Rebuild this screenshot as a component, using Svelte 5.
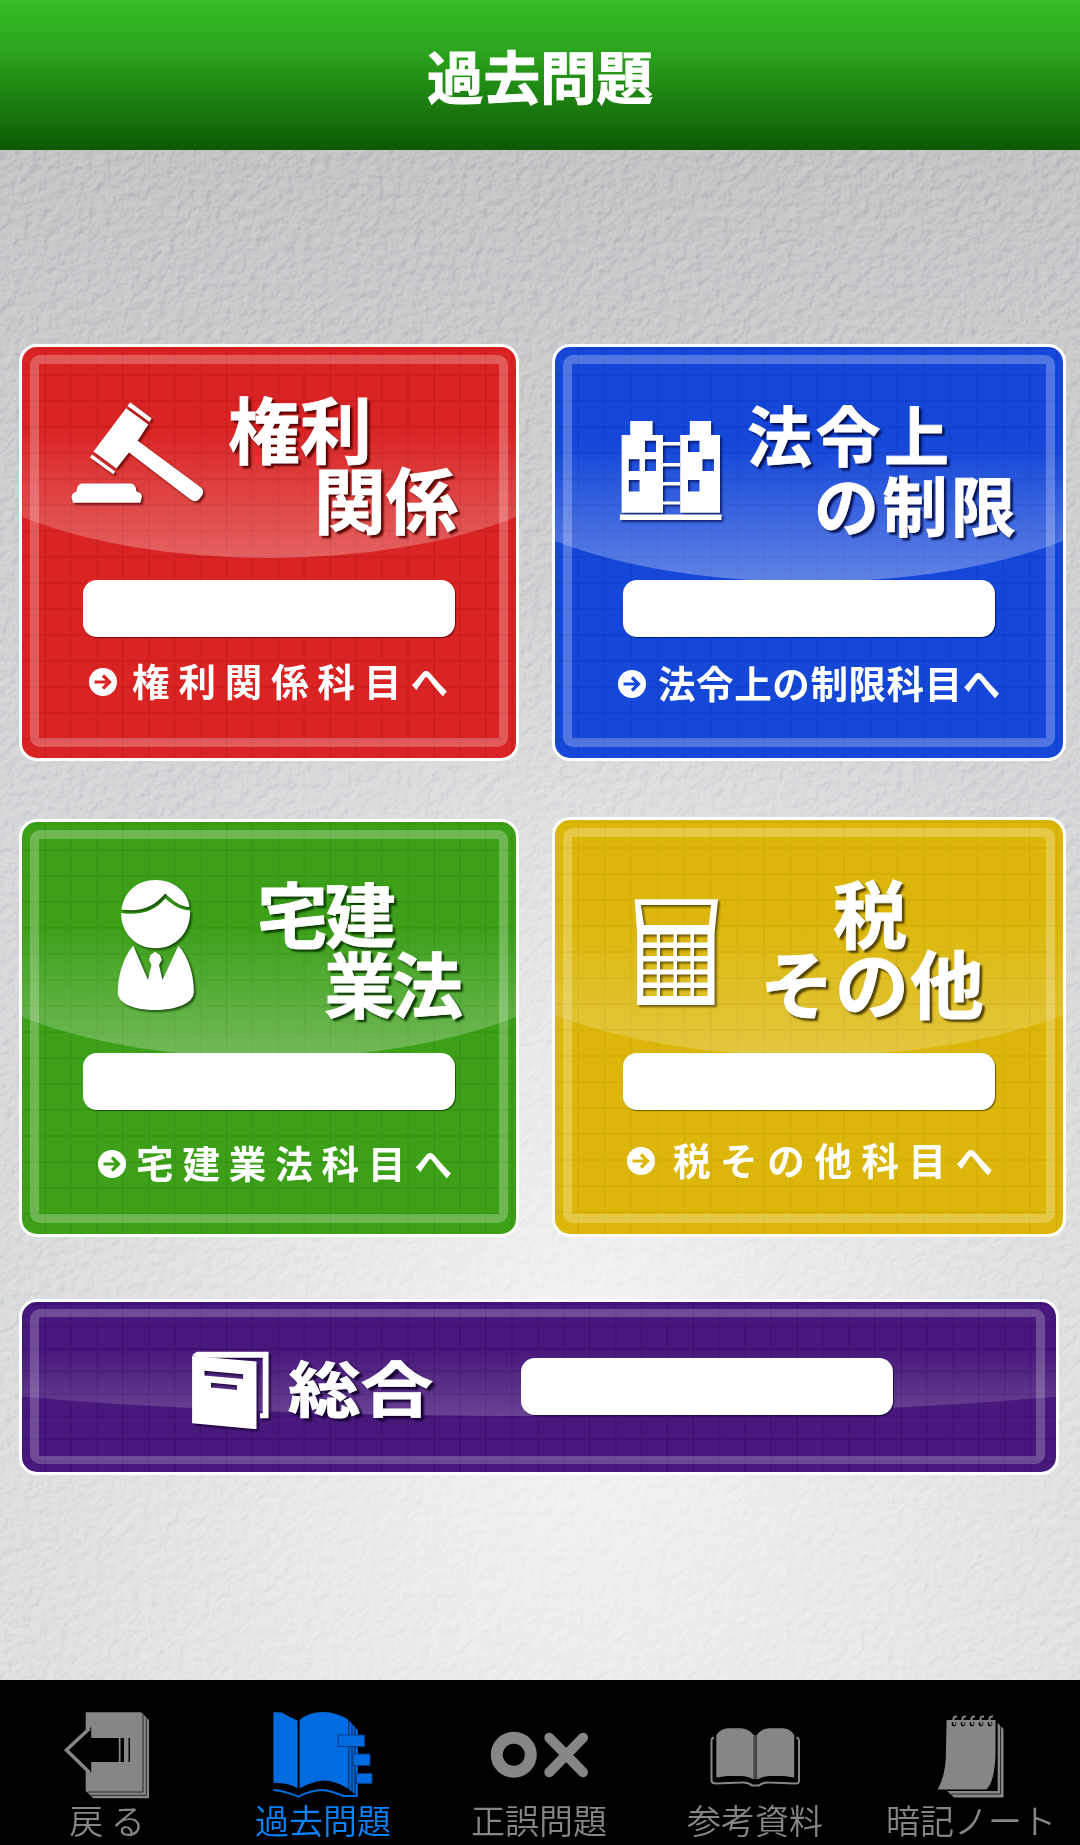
<script>
  // title: each entry is one line, the indent of the lines is set per card in the css
  const subjects = [
    { id: 'rights', title: ['権利', '関係'], link: '権利関係科目へ' },
    { id: 'limits', title: ['法令上', 'の制限'], link: '法令上の制限科目へ' },
    { id: 'trade', title: ['宅建', '業法'], link: '宅建業法科目へ' },
    { id: 'tax', title: ['税', 'その他'], link: '税その他科目へ' }
  ];

  const tabs = [
    { id: 'back', label: '戻 る' },
    { id: 'past', label: '過去問題' },
    { id: 'quiz', label: '正誤問題' },
    { id: 'docs', label: '参考資料' },
    { id: 'notes', label: '暗記ノート' }
  ];

  const keyCols = [11.3, 28, 45, 62];
  const keyRows = [38.5, 52, 65.5, 78.5, 92];
  const rings = [24, 33, 42, 51, 60];

  let current = 'past';
</script>

<div class="screen">
  <header>
    <h1>過去問題</h1>
  </header>

  <main>
    <svg class="paper" width="1080" height="1530" aria-hidden="true">
      <filter id="grain" x="0" y="0" width="100%" height="100%" color-interpolation-filters="sRGB">
        <feTurbulence type="fractalNoise" baseFrequency="0.11" numOctaves="3" seed="4" />
        <feColorMatrix values="0 0 0 0 0  0 0 0 0 0  0 0 0 0 0  1 0 0 0 0" />
        <feDiffuseLighting surfaceScale="2.4" diffuseConstant="0.72" lighting-color="#fff">
          <feDistantLight azimuth="225" elevation="45" />
        </feDiffuseLighting>
      </filter>
      <rect width="1080" height="1530" filter="url(#grain)" />
    </svg>

    <div class="subjects">
      {#each subjects as subject}
        <button class="card {subject.id}">
          <span class="gloss"></span>
          <span class="frame"></span>
          <span class="head">
            {#if subject.id === 'rights'}
              <svg class="icon" width="136" height="106">
                <path d="M60.2 2.3 81.5 18.3 79.5 22 57.5 6z" />
                <path d="M56 8.3 78.3 24.6 67.7 40.7 131 87.5Q134.5 91 132.3 95L129 99.5Q125.500 103 120.500 99.5L59 52.500 46.400 68.500 23.500 51.500z" />
                <path d="M22 54.500 45 71.500 43.300 74.300 20 57.500z" />
                <path d="M12 83.500H61Q66 84 66.500 91.500 71.500 92.500 71.900 96.500L70.500 102.700H3L1.600 97Q2 92.500 6.400 91.700 7 84 12 83.500z" />
              </svg>
            {:else if subject.id === 'limits'}
              <svg class="icon" width="106" height="106">
                <path fill-rule="evenodd" d="M3.600 17H12.200V3H34.600V17H45V94.700H3.600z M27 22.700V34H38V22.700z M10.800 41.300V53H21.500V41.300z M27 41.300V53H38V41.300z M10.800 62V73.500H21.500V62z" />
                <path fill-rule="evenodd" d="M62.200 17H71.800V3H93.100V17H102V94.700H62.200z M70 22.700V34H81.500V22.700z M84.500 41.300V53H96V41.300z M70 62V73.500H81.500V62z" />
                <path d="M45 24H62V27.500H45z M45 45H62V48.500H45z M45 64H62V67.500H45z M45 83.500H62V86.500H45z M1.900 96.500H103.500V102H1.900z" />
              </svg>
            {:else if subject.id === 'trade'}
              <svg class="icon" width="84" height="136">
                <path d="M6.500 31.500C9 14 22 2 40.500 2S73 14 74.500 29C65 29 57 22 50.300 15.500 38 30 25 34 6.500 31.500z" />
                <path d="M6.200 35C25 38 40 33 50.300 20.500 58 27 66 32.500 75 32.500 76 54 61 70.300 40.600 70.300S5.500 54 6.200 35z" />
                <path d="M18.300 67.700 33 102 36.500 87 34 82 35.500 77 40 73.700 45 77 46.800 82 44 87 47.500 102 63.400 67.700C74 79 79 98 78.800 114 78.500 126 60 132 40 132S2.500 126 2.800 114C3 98 8 79 18.300 67.700z" />
              </svg>
            {:else}
              <svg class="icon" width="90" height="114">
                <path fill-rule="evenodd" d="M2.700 3.300H86L82.600 37V109H5.100V37z M8.900 9 12 29H76.700L79.100 9z {keyRows.map((y) => keyCols.map((x) => `M${x} ${y}v8h13.500v-8z`).join(' ')).join(' ')}" />
              </svg>
            {/if}
            <span class="title">
              {#each subject.title as line}
                <span>{line}</span>
              {/each}
            </span>
          </span>
          <span class="score"></span>
          <span class="link">
            <svg width="28" height="28" viewBox="0 0 28 28">
              <circle cx="14" cy="14" r="14" />
              <path class="arrow" d="M5.500 14H20M14 7.500 20.500 14 14 20.500" />
            </svg>
            <span>{subject.link}</span>
          </span>
        </button>
      {/each}
    </div>

    <button class="card total">
      <span class="gloss"></span>
      <span class="frame"></span>
      <svg class="icon" width="84" height="88">
        <path d="M2.100 7 7 3.700H78.600V70.300H70V65.300H72.700V9.700H8z" />
        <path fill-rule="evenodd" d="M2.100 8 66.500 13.500V81.300L2.100 75.300z M14.500 22.700V27.500L53.100 31V26.300z M21 34.700V39.500L47 42V37.300z" />
      </svg>
      <span class="title"><span>総合</span></span>
      <span class="score"></span>
    </button>
  </main>

  <nav>
    {#each tabs as tab}
      <button class="tab" class:active={tab.id === current}>
        {#if tab.id === 'back'}
          <svg width="92" height="94">
            <path d="M24.700 4.300H80L88 12V90.300H32.300L24.700 82.700z" />
            <path class="cut" d="M82 7V84H27M85.300 10V87.300H30" />
            <path class="hole" d="M30.200 19V30H57.800V54H30.200V65L5.400 42z M59.500 30H63V54H59.500z M67.500 30H69V54H67.500z" />
            <path class="line thick" d="M28.500 20.500 5.400 42 28.500 64.500" />
          </svg>
        {:else if tab.id === 'past'}
          <svg width="108" height="94">
            <path d="M4.400 4.300 13 4.500Q20 9 28.500 12.500V80.300Q21 75 4.400 74.700z" />
            <path d="M30.600 12Q40 4 53.700 4 68 4 79.500 12L88.800 22V88.500L79.500 81Q67 72.500 53.700 72.500 42 74 30.600 80.300z" />
            <path class="cut" d="M79.800 12V82M83 16V85M86 19V87" />
            <path class="line" d="M4.400 82Q16 83 29.600 88.700 42 82 53.700 82 63 83 74.300 88H88.800" />
            <path class="tag" d="M69.200 27H95.700V38.500H69.200z M84 46H101V57.500H84z M87.400 65.500H103V75.500H87.400z" />
          </svg>
        {:else if tab.id === 'quiz'}
          <svg width="108" height="94">
            <circle class="ring" cx="28.800" cy="46.700" r="17" />
            <path class="cross" d="M64.300 29.700 98 64.300M98 29.700 64.300 64.300" />
          </svg>
        {:else if tab.id === 'docs'}
          <svg width="102" height="94">
            <path d="M12.300 27Q17 20.300 24 20.300H37Q44 20.300 49.800 27V71.500Q44 68 37 68H23L12.300 69.500z" />
            <path d="M52.800 27Q58 20.300 65 20.300H79Q86 20.300 90.200 27V69.500L80 68H65Q59 68 52.800 71.500z" />
            <path class="line" d="M10 29.500Q7.500 30 7.500 33V73Q8 75.500 12 75.500L38 74.500Q44 74 48 77.500H55Q59 74 65 74.500L91 75.500Q95 75.500 95 73V33Q95 30 92.500 29.500" />
            <path class="spine" d="M51.300 27V71" />
          </svg>
        {:else}
          <svg width="80" height="94">
            <path d="M66.500 14.500 72.500 21V89.500H23L16 83H66.500z" />
            <path class="cut" d="M66 14V83M69.500 17V86H20" />
            <path d="M15.600 12H64.500V45Q64 74 55.200 81.500H6.700Q14 68 14.800 50z" />
            <path class="hole" d="M64.500 55V81.500H57Q62 74 64.500 55z" />
            {#each rings as x}
              <circle class="hole" cx={x - 1} cy="16" r="2.400" />
              <path class="line" d="M{x} 17Q{x - 4} 8 {x + 2} 8.500" />
            {/each}
          </svg>
        {/if}
        <span>{tab.label}</span>
      </button>
    {/each}
  </nav>
</div>

<style>
  :global(body) {
    margin: 0;
  }

  .screen {
    width: 1080px;
    height: 1845px;
    display: flex;
    flex-direction: column;
    overflow: hidden;
    font-family: "Noto Sans CJK JP", sans-serif;
  }

  button {
    font: inherit;
    color: inherit;
    margin: 0;
    padding: 0;
    cursor: pointer;
  }

  svg {
    display: block;
    flex: none;
  }

  header {
    height: 150px;
    flex: none;
    display: flex;
    align-items: center;
    justify-content: center;
    background: linear-gradient(#36bd26, #2ba41d 35%, #0c5a03);
  }

  h1 {
    margin: 0;
    padding-bottom: 3px;
    font-size: 56.500px;
    line-height: 80px;
    font-weight: 700;
    color: #fff;
    -webkit-text-stroke: 1px #fff;
  }

  main {
    position: relative;
    height: 1530px;
    flex: none;
    box-sizing: border-box;
    padding: 194px 0 0 19px;
    background:
      radial-gradient(ellipse 600px 800px at 590px 1230px, #f4f4f4, rgba(240, 240, 240, 0)),
      linear-gradient(#c4c5c7, #cbccce 15%, #d5d7d9 45%, #d9dbdc 75%, #dfe0e1);
  }

  .paper {
    position: absolute;
    top: 0;
    left: 0;
    opacity: 0.6;
    mix-blend-mode: soft-light;
  }

  .subjects {
    display: grid;
    grid-template-columns: 500px 514px;
    grid-template-rows: 417px 420px;
    gap: 56px 33px;
  }

  .card {
    position: relative;
    display: flex;
    flex-direction: column;
    align-items: flex-start;
    overflow: hidden;
    box-sizing: border-box;
    border: 3px solid #fff;
    border-radius: 18px;
    color: #fff;
    text-align: left;
    background-color: var(--fill);
    background-image:
      linear-gradient(90deg, var(--rule) 2px, transparent 2px),
      linear-gradient(var(--rule) 2px, transparent 2px);
    background-size: 25.950px 100%, 100% 26px;
    background-position: 22px 0, 0 1px;
  }

  .rights { --fill: #d92423; --rule: #cf1e1e; --shade: rgba(80, 0, 0, 0.75); }
  .limits { --fill: #1548d9; --rule: #1241cf; --shade: rgba(0, 10, 70, 0.7); }
  .trade { --fill: #3ca019; --rule: #379815; --shade: rgba(10, 55, 0, 0.75); }
  .tax { --fill: #dcb70a; --rule: #d4af07; --shade: rgba(75, 60, 0, 0.8); }
  .total { --fill: #48197c; --rule: #3f1273; --shade: rgba(20, 0, 45, 0.8); }

  .trade {
    margin-top: 2px;
  }

  .limits, .tax {
    background-size: 26.600px 100%, 100% 26px;
  }

  /* light reflection, its lower edge is the bottom of a wide ellipse */
  .gloss {
    position: absolute;
    left: -20%;
    width: 140%;
    top: -64px;
    height: 275px;
    border-radius: 50%;
    background: linear-gradient(transparent 52%, rgba(255, 255, 255, 0.28));
  }

  .limits .gloss {
    top: -40px;
    background: linear-gradient(transparent 50%, rgba(255, 255, 255, 0.32));
  }

  .trade .gloss, .tax .gloss {
    top: -39px;
  }

  .tax .gloss {
    background: linear-gradient(transparent 50%, rgba(255, 255, 255, 0.22));
  }

  .total .gloss {
    top: -16px;
    height: 130px;
    background: linear-gradient(transparent 50%, rgba(255, 255, 255, 0.18));
  }

  .frame {
    position: absolute;
    inset: 8px 8px 11px;
    border: 9px solid rgba(255, 255, 255, 0.25);
    border-radius: 10px;
  }

  .total .frame {
    inset: 7px 11px 8px 8px;
    border-width: 8.500px 9px;
    border-color: rgba(255, 255, 255, 0.22);
  }

  .head, .score, .link, .icon, .title {
    position: relative;
  }

  .head {
    display: flex;
    align-items: flex-start;
    height: 233px;
    flex: none;
  }

  .trade .head {
    height: 231px;
  }

  .icon {
    fill: #fff;
    filter: drop-shadow(2px 2px 1px var(--shade));
  }

  .title {
    display: flex;
    flex-direction: column;
    font-size: 72px;
    line-height: 69.500px;
    font-weight: 700;
    white-space: nowrap;
    -webkit-text-stroke: 0.800px #fff;
    text-shadow: 2px 2px 2px var(--shade), 3px 3px 2px var(--shade);
  }

  .rights .icon { margin: 53px 0 0 48px; }
  .rights .title { margin: 45px 0 0 22px; }
  .rights .title span + span { margin-left: 86px; }

  .limits .icon { margin: 71px 0 0 63px; }
  .limits .title {
    margin: 52px 0 0 23px;
    font-size: 65px;
    letter-spacing: 3.500px;
  }
  .limits .title span + span { margin-left: 67px; }

  .trade .icon { margin: 56px 0 0 93px; }
  .trade .title {
    margin: 55px 0 0 58px;
    font-size: 71px;
    letter-spacing: -3px;
  }
  .trade .title span + span { margin-left: 67px; }

  .tax .icon { margin: 76px 0 0 77px; }
  .tax .title {
    margin: 56px 0 0 38px;
    font-size: 74px;
    letter-spacing: 1px;
  }
  .tax .title span:first-child { margin-left: 73px; }

  .score {
    width: 372px;
    height: 57px;
    flex: none;
    margin-left: 61px;
    border-radius: 14px;
    background: #fff;
    box-shadow: 1px 1px 1px 0 var(--shade);
  }

  .limits .score, .tax .score {
    margin-left: 68px;
  }

  .link {
    display: flex;
    align-items: center;
    height: 90px;
    margin-left: 67px;
    gap: 15px;
    font-size: 37.500px;
    font-weight: 700;
    letter-spacing: 8.900px;
    white-space: nowrap;
  }

  .link svg {
    fill: #fff;
  }

  .link span {
    padding-bottom: 5px;
  }

  .arrow {
    fill: none;
    stroke: var(--fill);
    stroke-width: 3.200;
  }

  .limits .link {
    height: 93px;
    margin-left: 63px;
    gap: 12px;
    letter-spacing: 0.600px;
  }

  .trade .link {
    height: 108px;
    margin-left: 76px;
    gap: 10px;
  }

  .tax .link {
    height: 102px;
    margin-left: 72px;
    gap: 18px;
    letter-spacing: 9.600px;
  }

  .total {
    flex-direction: row;
    width: 1040px;
    height: 176px;
    margin-top: 62px;
    background-size: 25.950px 100%, 100% 22.500px;
  }

  .total .icon { margin: 46px 0 0 168px; }
  .total .title {
    margin: 54px 0 0 14px;
    width: 145px;
    font-size: 60px;
    line-height: 60px;
    transform: scaleX(1.210);
    transform-origin: left;
  }
  .total .score { margin: 56px 0 0 88px; }

  nav {
    height: 165px;
    flex: none;
    display: grid;
    grid-template-columns: repeat(5, 216px);
    margin-left: -1px;
    padding-left: 0;
    background: #000;
    box-shadow: 1px 0 #000;
  }

  .tab {
    --ink: #868686;
    display: flex;
    flex-direction: column;
    align-items: center;
    border: 0;
    padding-top: 28px;
    background: none;
    color: var(--ink);
    fill: var(--ink);
    font-size: 34px;
    line-height: 36px;
    font-weight: 350;
    white-space: nowrap;
  }

  .tab.active {
    --ink: #016ce0;
    color: #0a83ff;
  }

  .tab .hole {
    fill: #000;
  }

  .tab .line, .tab .cut, .tab .spine, .tab .ring, .tab .cross {
    fill: none;
    stroke: var(--ink);
    stroke-width: 2;
  }

  .tab .cut {
    stroke: #000;
    stroke-width: 1;
    opacity: 0.7;
  }

  .tab .spine {
    stroke: #4a4a4a;
    stroke-width: 3;
  }

  .tab .thick {
    stroke-width: 3.500;
  }

  .tab .ring {
    stroke-width: 12;
  }

  .tab .cross {
    stroke-width: 10;
    stroke-linecap: round;
  }

  .tab .tag {
    stroke: #003a80;
    stroke-width: 1;
  }
</style>
